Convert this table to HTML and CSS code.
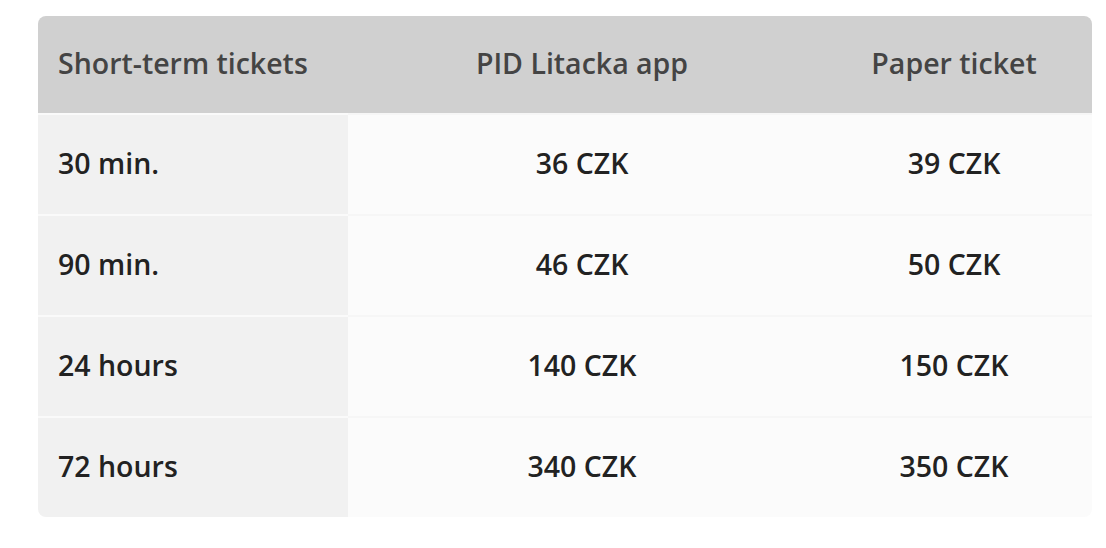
FILE: index.html
```html
<!DOCTYPE html>
<html lang="en">
<head>
<meta charset="utf-8">
<title>Short-term tickets</title>
<link rel="stylesheet" href="styles.css">
</head>
<body>
<div class="wrap">
  <table class="prices">
    <colgroup>
      <col class="c1"><col class="c2"><col class="c3">
    </colgroup>
    <thead>
      <tr><th class="label">Short-term tickets</th><th>PID Litacka app</th><th>Paper ticket</th></tr>
    </thead>
    <tbody>
      <tr><td class="label">30 min.</td><td>36 CZK</td><td>39 CZK</td></tr>
      <tr><td class="label">90 min.</td><td>46 CZK</td><td>50 CZK</td></tr>
      <tr><td class="label">24 hours</td><td>140 CZK</td><td>150 CZK</td></tr>
      <tr><td class="label">72 hours</td><td>340 CZK</td><td>350 CZK</td></tr>
    </tbody>
  </table>
</div>
</body>
</html>
```

FILE: styles.css
```css
html, body {
  margin: 0;
  padding: 0;
  background: #ffffff;
}
.wrap {
  padding: 16px 14px 0 38px;
}
.prices {
  width: 1054px;
  border-collapse: separate;
  border-spacing: 0;
  table-layout: fixed;
  font-family: "Open Sans", "Noto Sans", sans-serif;
  font-weight: 600;
  font-size: 28.5px;
  border-radius: 8px;
  overflow: hidden;
}
.c1 { width: 310px; }
.c2 { width: 468px; }
.c3 { width: 276px; }
.prices th {
  background: #d0d0d0;
  color: #444444;
  height: 94px;
  padding: 0 0 3px 0;
  text-align: center;
  font-weight: 600;
  vertical-align: middle;
}
.prices td {
  background: #fbfbfb;
  color: #222222;
  height: 96px;
  padding: 0 0 3px 0;
  text-align: center;
  vertical-align: middle;
  border-top: 2px solid #f6f6f6;
}
.prices td.label {
  background: #f1f1f1;
  border-top-color: #fafafa;
}
.prices .label {
  text-align: left;
  padding-left: 20px;
}
```
